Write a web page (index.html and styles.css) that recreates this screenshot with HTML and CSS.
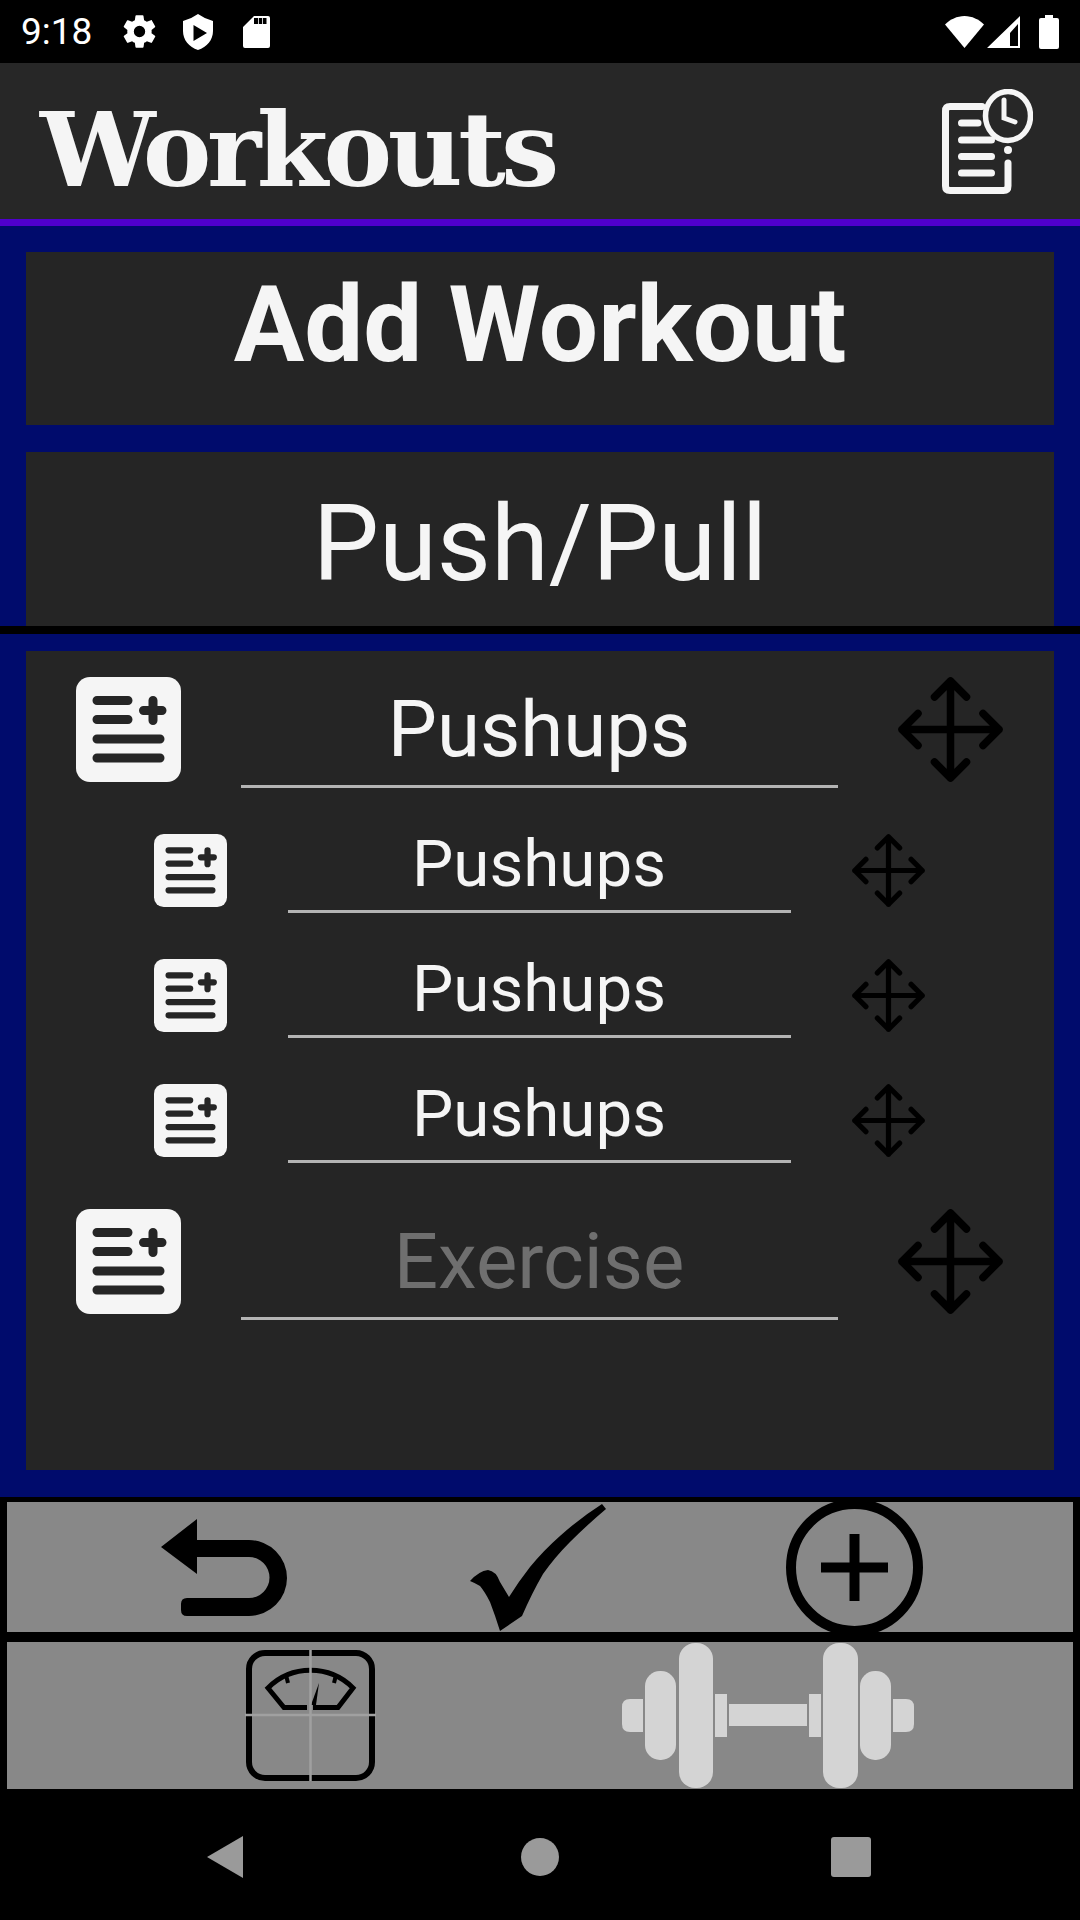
FILE: index.html
```html
<!DOCTYPE html>
<html lang="en">
<head>
    <meta charset="UTF-8">
    <meta name="viewport" content="width=device-width, initial-scale=1.0">
    <title>Workouts</title>
    <link rel="stylesheet" href="styles.css">
</head>
<body>

    <svg class="defs" width="0" height="0">
        <symbol id="noteAdd" viewBox="0 0 105 105">
            <rect width="105" height="105" rx="14" fill="#f5f5f5"/>
            <g stroke="#252525" stroke-width="9" stroke-linecap="round">
                <path d="M21 23.500H52M21 42.500H52M21 62H84M21 81H84M67.500 33.500H86M77 23.500V43.500"/>
            </g>
        </symbol>
        <symbol id="move" viewBox="0 0 105 105">
            <g fill="none" stroke="#000" stroke-width="7.500" stroke-linecap="round" stroke-linejoin="round">
                <path d="M52.500 4V101M4 52.500H101M36.500 20L52.500 4L68.500 20M36.500 85L52.500 101L68.500 85M20 36.500L4 52.500L20 68.500M85 36.500L101 52.500L85 68.500"/>
            </g>
        </symbol>
    </svg>

    <div class="status-bar">
        <span class="clock">9:18</span>
        <svg class="st-gear" viewBox="0 0 24 24"><path fill="#fff" d="M19.400 13c.05-.33.08-.66.08-1s-.03-.67-.08-1l2.100-1.650c.2-.15.25-.42.12-.64l-2-3.460c-.12-.22-.39-.3-.61-.22l-2.490 1c-.52-.4-1.080-.73-1.690-.98l-.38-2.650A.49.49 0 0 0 14 2h-4c-.25 0-.46.18-.49.42l-.38 2.650c-.61.25-1.170.59-1.690.98l-2.490-1c-.23-.09-.49 0-.61.22l-2 3.460c-.13.22-.07.49.12.64L4.560 11c-.05.33-.08.67-.08 1s.03.67.08 1l-2.100 1.650c-.2.150-.25.42-.12.64l2 3.460c.12.22.39.3.61.22l2.490-1c.52.4 1.080.73 1.690.98l.38 2.650c.03.24.24.42.49.42h4c.25 0 .46-.18.49-.42l.38-2.650c.61-.25 1.170-.59 1.690-.98l2.490 1c.23.09.49 0 .61-.22l2-3.460c.12-.22.07-.49-.12-.64zM12 15.500a3.500 3.500 0 1 1 0-7 3.500 3.500 0 0 1 0 7z"/></svg>
        <svg class="st-shield" viewBox="0 0 30 36"><path fill="#fff" fill-rule="evenodd" d="M15 0Q22 5 30 7V17C30 26 24 33 15 36C6 33 0 26 0 17V7Q8 5 15 0ZM10.500 11V27L24 19Z"/></svg>
        <svg class="st-sd" viewBox="0 0 27 32"><path fill="#fff" fill-rule="evenodd" d="M11 0H25Q27 0 27 2V30Q27 32 25 32H2Q0 32 0 30V11ZM11 2V8H15V2ZM15.800 2V8H19V2ZM19.800 2V8H23.500V2Z"/></svg>
        <span class="spacer"></span>
        <svg class="st-wifi" viewBox="0 0 39 32"><path fill="#fff" d="M19.500 32L0 8.500C5 3.500 12 0 19.500 0S34 3.500 39 8.500Z"/></svg>
        <svg class="st-signal" viewBox="0 0 33 32"><path fill="#fff" fill-rule="evenodd" d="M33 0V32H0ZM23 17V30H31V8Z"/></svg>
        <svg class="st-battery" viewBox="0 0 20 34"><path fill="#fff" d="M6 0H14V3H18Q20 3 20 5V32Q20 34 18 34H2Q0 34 0 32V5Q0 3 2 3H6Z"/></svg>
    </div>

    <div class="app-bar">
        <h1>Workouts</h1>
        <svg class="history-icon" viewBox="0 0 91 105">
            <g fill="none" stroke="#f5f5f5" stroke-linecap="round">
                <path stroke-width="7" d="M40 17.500H8Q3.500 17.500 3.500 22V97Q3.500 101.500 8 101.500H61.500Q66 101.500 66 97V74"/>
                <path stroke-width="7" d="M19.500 34H36M19.500 51H49.500M19.500 67.500H49.500M19.500 84H49.500"/>
                <ellipse cx="66" cy="27" rx="22.500" ry="24.500" stroke-width="5.500" fill="#272727"/>
                <path stroke-width="5" d="M62 11V29L73 33"/>
            </g>
            <circle cx="66" cy="61" r="4" fill="#f5f5f5"/>
        </svg>
    </div>

    <div class="workout-list">
        <div class="card add-workout">Add Workout</div>
        <div class="card push-pull">Push/Pull</div>
    </div>

    <div class="editor">
        <div class="panel">
            <div class="row">
                <svg class="icon"><use href="#noteAdd"/></svg>
                <div class="field">Pushups</div>
                <svg class="icon"><use href="#move"/></svg>
            </div>
            <div class="row small">
                <svg class="icon"><use href="#noteAdd"/></svg>
                <div class="field">Pushups</div>
                <svg class="icon"><use href="#move"/></svg>
            </div>
            <div class="row small">
                <svg class="icon"><use href="#noteAdd"/></svg>
                <div class="field">Pushups</div>
                <svg class="icon"><use href="#move"/></svg>
            </div>
            <div class="row small">
                <svg class="icon"><use href="#noteAdd"/></svg>
                <div class="field">Pushups</div>
                <svg class="icon"><use href="#move"/></svg>
            </div>
            <div class="row">
                <svg class="icon"><use href="#noteAdd"/></svg>
                <div class="field hint">Exercise</div>
                <svg class="icon"><use href="#move"/></svg>
            </div>
        </div>
    </div>

    <div class="toolbars">
        <div class="toolbar actions">
            <svg class="back-icon" viewBox="0 0 126 97"><path d="M0 28L36 0V21H88A38 38 0 0 1 88 97H26Q20 97 20 91V85Q20 79 26 79H88A20.500 20.500 0 0 0 88 38H36V55Z"/></svg>
            <svg class="check-icon" viewBox="0 0 136 128"><path d="M0 78Q9 68 18 67Q26 68 30 79L39 94Q49 78 60 64Q74 47 90 33Q110 15 132 1L136 6Q117 22 100 39Q85 54 73 71Q62 90 52 113L30 128Q25 112 20 99Q15 89 10 83Q5 80 0 78Z"/></svg>
            <svg class="plus-icon" viewBox="0 0 137 137">
                <circle cx="68.500" cy="68.500" r="63.500" fill="none" stroke="#000" stroke-width="10"/>
                <path d="M63.500 35H73.500V63.500H102V73.500H73.500V102H63.500V73.500H35V63.500H63.500Z"/>
            </svg>
        </div>
        <div class="toolbar tabs">
            <svg class="scale-icon" viewBox="0 0 129 131">
                <g fill="none" stroke="#000">
                    <rect x="3" y="3" width="123" height="125" rx="16" stroke-width="6"/>
                    <path stroke-width="5" d="M61 57.500H38L22 38A60 60 0 0 1 107 38L92 57.500H67"/>
                    <path stroke-width="4" d="M40 25L42 33M90 25L88 33"/>
                </g>
                <path d="M73 33L70 55H65Z"/>
                <path fill="none" stroke="#a0a0a0" stroke-width="2.500" d="M64.500 0V131M-1 65H130"/>
            </svg>
            <svg class="dumbbell-icon" viewBox="0 0 292 145">
                <g fill="#d4d4d4">
                    <path d="M21 56V89H8Q0 89 0 81V64Q0 56 8 56Z"/>
                    <rect x="23" y="28" width="31" height="89" rx="15"/>
                    <rect x="57" y="0" width="34" height="145" rx="16"/>
                    <rect x="93" y="51" width="12" height="43"/>
                    <rect x="107" y="61" width="78" height="22"/>
                    <rect x="187" y="51" width="12" height="43"/>
                    <rect x="201" y="0" width="35" height="145" rx="16"/>
                    <rect x="238" y="28" width="31" height="89" rx="15"/>
                    <path d="M271 56H284Q292 56 292 64V81Q292 89 284 89H271Z"/>
                </g>
            </svg>
        </div>
    </div>

    <div class="nav-bar">
        <span class="nav-back"></span>
        <span class="nav-home"></span>
        <span class="nav-recent"></span>
    </div>

</body>
</html>
```

FILE: styles.css
```css
html, body {
    margin: 0;
    padding: 0;
}
body {
    width: 1080px;
    height: 1920px;
    overflow: hidden;
    display: flex;
    flex-direction: column;
    background-color: #000;
    font-family: Roboto, sans-serif;
    color: #f5f5f5;
}
svg {
    display: block;
    flex: none;
}
.defs {
    position: absolute;
}
.spacer {
    flex: 1;
}

/* status bar */
.status-bar {
    height: 63px;
    flex: none;
    display: flex;
    align-items: center;
    padding: 0 21px 0 21px;
    box-sizing: border-box;
    background-color: #000;
    color: #fff;
}
.clock {
    font-size: 37px;
    width: 99px;
}
.st-gear {
    width: 39px;
    height: 39px;
    margin-right: 24px;
}
.st-shield {
    width: 30px;
    height: 36px;
    margin-right: 30px;
}
.st-sd {
    width: 27px;
    height: 32px;
}
.st-wifi {
    width: 39px;
    height: 32px;
    margin-right: 3px;
}
.st-signal {
    width: 33px;
    height: 32px;
    margin-right: 19px;
}
.st-battery {
    width: 20px;
    height: 34px;
}

/* app bar */
.app-bar {
    height: 163px;
    flex: none;
    box-sizing: border-box;
    display: flex;
    align-items: center;
    justify-content: space-between;
    padding: 0 47px 0 40px;
    background-color: #272727;
    border-bottom: 7px solid #4f00cc;
}
.app-bar h1 {
    margin: 0;
    padding-top: 16px;
    font-family: "DejaVu Serif", serif;
    font-weight: bold;
    font-size: 103px;
    letter-spacing: -4.500px;
    line-height: 1;
}
.history-icon {
    width: 91px;
    height: 105px;
}

/* workout buttons */
.workout-list {
    height: 408px;
    flex: none;
    box-sizing: border-box;
    display: flex;
    flex-direction: column;
    gap: 27px;
    padding: 26px 26px 0;
    background-color: #000b6c;
    border-bottom: 8px solid #000;
}
.card {
    height: 173px;
    flex: none;
    padding-bottom: 26px;
    box-sizing: border-box;
    display: flex;
    align-items: center;
    justify-content: center;
    background-color: #252525;
    font-size: 105px;
}
.add-workout {
    font-weight: bold;
}
.card.push-pull {
    height: 174px;
    padding-bottom: 0;
    padding-top: 10px;
}

/* exercise editor */
.editor {
    flex: 1;
    display: flex;
    padding: 17px 26px 27px;
    background-color: #000b6c;
}
.panel {
    flex: 1;
    display: flex;
    flex-direction: column;
    gap: 52px;
    padding-top: 26px;
    background-color: #252525;
}
.row {
    display: flex;
    justify-content: center;
    gap: 60px;
    height: 105px;
    margin-right: 2px;
}
.row .icon {
    width: 105px;
    height: 105px;
}
.field {
    width: 597px;
    height: 111px;
    line-height: 105px;
    text-align: center;
    font-size: 78px;
    border-bottom: 3px solid #b4b4b4;
    box-sizing: border-box;
}
.hint {
    color: #6f6f6f;
}
.row.small {
    height: 73px;
    gap: 61px;
}
.row.small .icon {
    width: 73px;
    height: 73px;
}
.row.small .field {
    width: 503px;
    height: 79px;
    line-height: 59px;
    font-size: 65.500px;
}

/* bottom toolbars */
.toolbars {
    flex: none;
    display: flex;
    flex-direction: column;
    gap: 10px;
    padding: 5px 7px 0 7px;
    background-color: #000;
}
.toolbar {
    display: flex;
    align-items: center;
    background-color: #888;
}
.actions {
    height: 130px;
    padding-left: 154px;
}
.back-icon {
    width: 126px;
    height: 97px;
    margin-right: 183px;
}
.check-icon {
    width: 136px;
    height: 128px;
    margin-right: 180px;
}
.plus-icon {
    width: 137px;
    height: 137px;
}
.tabs {
    height: 147px;
    padding-left: 239px;
}
.scale-icon {
    width: 129px;
    height: 131px;
    margin-right: 247px;
    overflow: visible;
}
.dumbbell-icon {
    width: 292px;
    height: 145px;
}

/* android nav */
.nav-bar {
    height: 131px;
    flex: none;
    box-sizing: border-box;
    display: flex;
    align-items: center;
    padding: 5px 0 0 207px;
    background-color: #000;
}
.nav-back {
    width: 36px;
    height: 42px;
    margin-right: 278px;
    background-color: #9a9a9a;
    clip-path: polygon(100% 0, 100% 100%, 0 50%);
}
.nav-home {
    width: 38px;
    height: 38px;
    margin-right: 272px;
    border-radius: 50%;
    background-color: #9a9a9a;
}
.nav-recent {
    width: 40px;
    height: 40px;
    border-radius: 3px;
    background-color: #9a9a9a;
}
```
